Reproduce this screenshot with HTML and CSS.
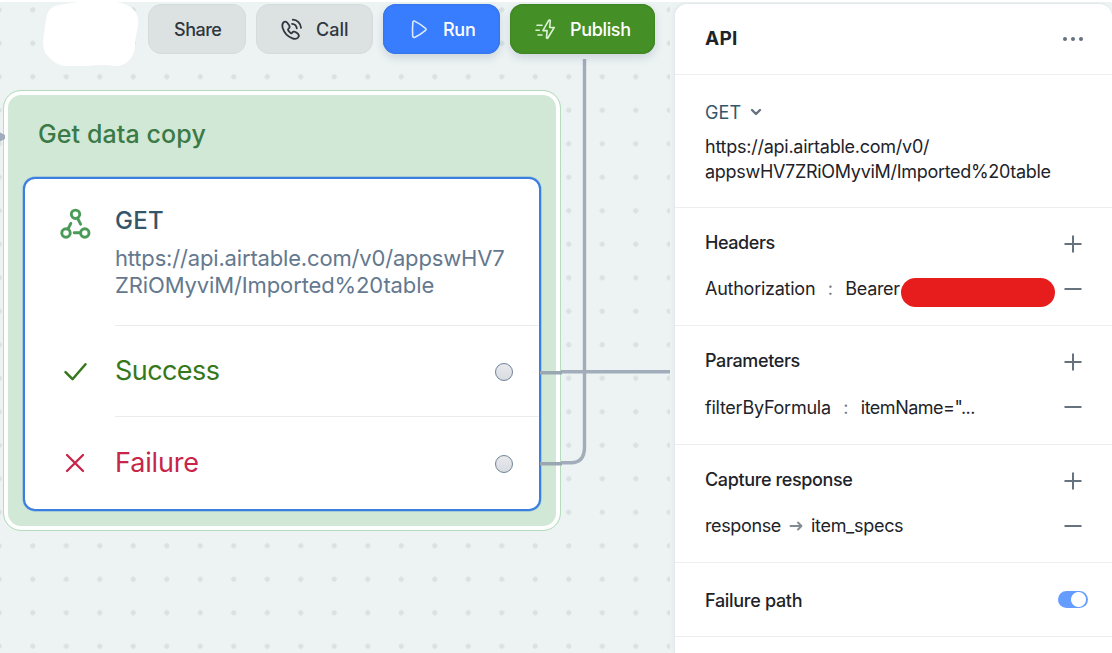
FILE: index.html
```html
<!DOCTYPE html>
<html lang="en">
<head>
<meta charset="utf-8">
<title>API step</title>
<link rel="stylesheet" href="styles.css">
</head>
<body>
<div class="app">
  <main class="canvas">
    <div class="dots"></div>
    <section class="node">
      <h2 class="node-title"><span class="t-title">Get data copy</span></h2>
      <div class="card">
        <div class="row request">
          <svg class="icon hook" width="32" height="32" viewBox="0 0 32 32" fill="none" stroke="#4a9a58" stroke-width="2.9" stroke-linecap="round"><circle cx="16.5" cy="7.3" r="4.2"/><circle cx="7" cy="26" r="4.2"/><circle cx="25.8" cy="26" r="4.2"/><path d="M18.6 11.4l3 5.8M9.1 21.8l2.7-5.4M15.2 25.7h5.4"/></svg>
          <div class="row-body">
            <div class="method"><span class="t-method">GET</span></div>
            <div class="url"><span class="t-url1">https://api.airtable.com/v0/appswHV7</span><br><span class="t-url2">ZRiOMyviM/Imported%20table</span></div>
          </div>
        </div>
        <div class="row outcome success">
          <svg class="icon" width="32" height="32" viewBox="0 0 32 32" fill="none" stroke="currentColor" stroke-width="2.5" stroke-linecap="round" stroke-linejoin="round"><path d="M6.500 17.2l7 7L26.500 9.2"/></svg>
          <div class="row-body"><span class="t-success">Success</span><i class="port"></i></div>
        </div>
        <div class="row outcome failure">
          <svg class="icon" width="32" height="32" viewBox="0 0 32 32" fill="none" stroke="currentColor" stroke-width="2.300" stroke-linecap="round"><path d="M8 9l16 16M24 9l-16 16"/></svg>
          <div class="row-body"><span class="t-failure">Failure</span><i class="port"></i></div>
        </div>
      </div>
    </section>
    <svg class="wires" width="675" height="653" viewBox="0 0 675 653" fill="none" stroke="#a1adbb" stroke-width="3.4">
      <path d="M584.5 59V447Q584.5 462.7 571 462.7H561M561 371.7H670"/>
      <path d="M540 372.8H562M540 463.8H562" stroke="#9aa6b1"/>
      <path d="M0 132.5l5 2.500v4l-5 2.500z" fill="#a1adbb" stroke="none"/>
    </svg>
    <svg class="blank" width="96" height="66" viewBox="0 0 96 66"><path d="M12 5C22 3 27 2 36 1Q52-1 73 1C88 3 97 11 95 25L92 40V45C91 57 83 66 71 65Q60 63 45 65H21C11 63 7 57 3 53Q0 49 0 40L3 19Q4 8 12 5Z" fill="#fff"/></svg>
    <nav class="toolbar">
      <button class="btn share"><span class="t-share">Share</span></button>
      <button class="btn call">
        <svg width="24" height="24" viewBox="0 0 24 24" fill="none" stroke="currentColor" stroke-width="1.8" stroke-linecap="round" stroke-linejoin="round"><path d="M19 16.800l-2.500-1.700c-1.500-.9-2.700-.4-3.300.7-.6.9-1.300.6-2.300-.4l-1.300-1.500c-.8-1-.8-1.600.1-2.300 1-.8 1.300-1.800.4-3.300L8.300 5.800C7.200 4.300 5.600 4.200 4.500 5.300 3.200 6.600 3 8.500 3.700 11c1.500 4.900 5 8.600 9.700 10.300 2.500.9 4.500.6 5.700-.8.900-1.200.9-2.700-.1-3.700zM13.800 2.700c4.500.2 7.900 3.600 8.200 8.100M13 6.800c2.700.2 4.500 1.900 4.800 4.600"/></svg>
        <span class="t-call">Call</span>
      </button>
      <button class="btn run">
        <svg width="24" height="24" viewBox="0 0 24 24" fill="none" stroke="#dceaff" stroke-width="1.6" stroke-linejoin="round"><path d="M6.900 5.200Q7.100 3.600 8.600 4.100Q14 6.800 19.500 11.300q1.100 1 0 2Q14.500 17.500 9 20.200q-2 .8-2.300-1Q6.200 12 6.900 5.200z"/></svg>
        <span class="t-run">Run</span>
      </button>
      <button class="btn publish">
        <svg width="24" height="24" viewBox="0 0 24 24" fill="none" stroke="#dcf2d4" stroke-width="1.6" stroke-linecap="round" stroke-linejoin="round"><path d="M15.700 3.400L9.900 13.600h4.200L13.500 20.800q.5 1.200 1.300.2L21.200 10.500h-4.500L17.300 3.500q-.7-1-1.600-.1zM4 8.300h5M3 13.200h3.300M5 18h4"/></svg>
        <span class="t-publish">Publish</span>
      </button>
    </nav>
  </main>
  <aside class="panel">
    <header class="panel-head">
      <h1><span class="t-api">API</span></h1>
      <svg width="30" height="30" viewBox="0 0 30 30" fill="#66727e"><circle cx="7" cy="15" r="2"/><circle cx="15" cy="15" r="2"/><circle cx="23" cy="15" r="2"/></svg>
    </header>
    <section class="endpoint">
      <div class="verb"><span class="t-verb">GET</span><svg width="12" height="10" viewBox="0 0 12 10" fill="none" stroke="#66727e" stroke-width="2.400" stroke-linecap="round" stroke-linejoin="round"><path d="M2 3l4 4 4-4"/></svg></div>
      <div class="address"><span class="t-addr1">https://api.airtable.com/v0/</span><br><span class="t-addr2">appswHV7ZRiOMyviM/Imported%20table</span></div>
    </section>
    <section class="group">
      <div class="line"><h3><span class="t-headers">Headers</span></h3><svg class="pm" viewBox="0 0 30 30"><path d="M6.500 15h17M15 6.500v17"/></svg></div>
      <div class="line item"><span class="t-auth">Authorization</span><b class="colon">:</b><span class="t-bearer">Bearer</span><i class="redacted"></i><svg class="pm" viewBox="0 0 30 30"><path d="M6.500 15h17"/></svg></div>
    </section>
    <section class="group params">
      <div class="line"><h3><span class="t-params">Parameters</span></h3><svg class="pm" viewBox="0 0 30 30"><path d="M6.500 15h17M15 6.500v17"/></svg></div>
      <div class="line item"><span class="t-filter">filterByFormula</span><b class="colon">:</b><span class="t-item">itemName="...</span><svg class="pm" viewBox="0 0 30 30"><path d="M6.500 15h17"/></svg></div>
    </section>
    <section class="group">
      <div class="line"><h3><span class="t-capture">Capture response</span></h3><svg class="pm" viewBox="0 0 30 30"><path d="M6.500 15h17M15 6.500v17"/></svg></div>
      <div class="line item"><span class="t-resp">response</span><svg class="arrow" width="14" height="12" viewBox="0 0 14 12" fill="none" stroke="#828a94" stroke-width="1.900" stroke-linecap="round" stroke-linejoin="round"><path d="M1.500 6h11M9 2.500L12.500 6 9 9.500"/></svg><span class="t-specs">item_specs</span><svg class="pm" viewBox="0 0 30 30"><path d="M6.500 15h17"/></svg></div>
    </section>
    <section class="toggle-row">
      <h3><span class="t-path">Failure path</span></h3><span class="toggle"></span>
    </section>
  </aside>
</div>
</body>
</html>
```
FILE: styles.css
```css
* { box-sizing: border-box; }
body { margin: 0; font-family: Inter, "Liberation Sans", sans-serif; color: #1e2329; }
h1, h2, h3 { margin: 0; font-weight: 500; }
span { white-space: nowrap; }
.app { width: 1112px; height: 653px; display: flex; background: #edf3f3; border-top: 2px solid #fff; overflow: hidden; }
.canvas { position: relative; width: 674px; margin-top: -2px; flex: none; }
.dots { position: absolute; left: 0; top: 2px; width: 670px; height: 651px;
  background-image: radial-gradient(circle at 16.75px 16.75px, #dae1e1 2.300px, transparent 2.900px);
  background-size: 33.5px 33.5px; background-position: 16px -9px; }
.wires { position: absolute; left: 0; top: 0; }
.blank { position: absolute; left: 43px; top: 1px; }

.node { position: absolute; left: 3px; top: 90px; width: 558px; height: 441px; border: 1px solid #b5dcbc; border-radius: 18px; background: #d0e8d5; box-shadow: inset 0 0 0 4px #fff; padding: 26px 19px 0; }
.node-title { font-size: 25px; line-height: 34px; height: 60px; padding-left: 15px; color: #3b7a46; }
.card { width: 518px; height: 334px; border: 2px solid #3b80e0; border-radius: 12px; background: #fff; box-shadow: 0 0 0 .5px #7fb0dc; }
.row { display: grid; grid-template-columns: 90px 1fr; }
.icon { margin-left: 34px; }
.row-body { border-bottom: 1px solid #ebeded; }
.request { height: 147px; }
.hook { margin-top: 28px; }
.request .row-body { padding-top: 27px; }
.method { font-size: 24px; line-height: 30px; font-weight: 500; color: #34566a; }
.url { font-size: 22px; line-height: 27px; margin-top: 9px; color: #64788e; }
.outcome { height: 91px; font-size: 27px; align-items: stretch; }
.outcome .icon { margin-top: 29px; }
.outcome .row-body { display: flex; justify-content: space-between; align-items: center; padding-right: 26px; }
.outcome .row-body span { padding-bottom: 1px; }
.success { color: #35781c; }
.failure { color: #c7254a; }
.failure .row-body { border: 0; }
.port { width: 18px; height: 18px; border: 1.5px solid #708296; border-radius: 50%; background: linear-gradient(#e8eaee, #d8dbe0); margin-top: 2px; }

.toolbar { position: absolute; left: 148px; top: 4px; display: flex; gap: 10px; }
.btn { height: 50px; border: 1px solid #d5dbdc; border-radius: 13px; background: #dce2e2; color: #30363f; font: 500 18px Inter, "Liberation Sans", sans-serif; display: flex; align-items: center; padding: 0; }
.btn svg { flex: none; }
.share { width: 98px; padding-left: 25px; }
.call { width: 117px; padding-left: 22px; gap: 13px; }
.run, .publish { border: 0; color: #fff; }
.run { width: 117px; padding-left: 23px; gap: 13px; background: #397dff; box-shadow: inset 0 0 2px 1px #3675e4, 0 4px 9px #37527a2e; }
.publish { width: 145px; padding-left: 23px; gap: 13px; background: #459026; box-shadow: inset 0 0 2px 1px #3d8422, 0 4px 9px #37527a2e; }

.panel { width: 438px; margin-top: 1px; border: 1px solid #e3e8e9; border-right: 0; border-bottom: 0; border-radius: 13px 13px 0 0; background: #fff; box-shadow: -1px 0 4px #2030400a; font-size: 18px; }
.panel section, .panel-head { padding-left: 30px; padding-right: 24px; border-bottom: 1px solid #eceeef; }
.panel-head { height: 71px; display: flex; align-items: center; justify-content: space-between; }
.panel-head h1 { font-size: 19px; font-weight: 700; padding-bottom: 2px; }
.endpoint { height: 133px; padding-top: 26px; }
.verb { display: flex; align-items: center; gap: 9px; height: 22px; color: #34566a; }
.address { margin-top: 11px; line-height: 25px; }
.group { height: 118px; padding-top: 21px; }
.params { height: 119px; }
.panel h3 { font-size: 18px; }
.group h3 { padding-bottom: 3px; }
.line { position: relative; display: flex; align-items: center; height: 30px; }
.line + .line { margin-top: 15px; }
.item span, .colon { padding-bottom: 1px; }
.params .item span, .params .colon { padding: 1px 0 0; }
.pm { width: 30px; height: 30px; margin-left: auto; fill: none; stroke: #66727e; stroke-width: 2; flex: none; }
.colon { width: 30px; text-align: center; font-weight: 400; color: #737d88; flex: none; }
.arrow { margin: 0 8px; }
.redacted { position: absolute; left: 196px; top: 4px; width: 154px; height: 29px; border-radius: 15px; background: #e71d1d; }
.toggle-row { height: 74px; display: flex; align-items: center; justify-content: space-between; }
.toggle-row h3 { padding-top: 1px; }
.toggle { width: 30px; height: 17px; border-radius: 9px; background: radial-gradient(circle at 20.500px 8.500px, #fff 7px, #649cff 7.900px); }

/* Tracking per label */
.t-title { letter-spacing: .1px; }
.t-method { letter-spacing: .3px; }
.t-url1 { letter-spacing: -.17px; }
.t-url2 { letter-spacing: -.12px; }
.t-success { letter-spacing: -.57px; }
.t-failure { letter-spacing: -.15px; }
.t-share { letter-spacing: -.5px; }
.t-run { letter-spacing: -.3px; }
.t-publish { letter-spacing: -.35px; }
.t-api { letter-spacing: .3px; }
.t-verb { letter-spacing: .1px; }
.t-addr1 { letter-spacing: -.25px; }
.t-addr2 { letter-spacing: -.3px; }
.t-headers { letter-spacing: -.43px; }
.t-auth, .t-filter { letter-spacing: -.25px; }
.t-bearer { letter-spacing: -.3px; }
.t-params, .t-capture { letter-spacing: -.37px; }
.t-item { letter-spacing: -.5px; }
.t-resp { letter-spacing: -.37px; }
.t-specs, .t-path { letter-spacing: -.3px; }
```
